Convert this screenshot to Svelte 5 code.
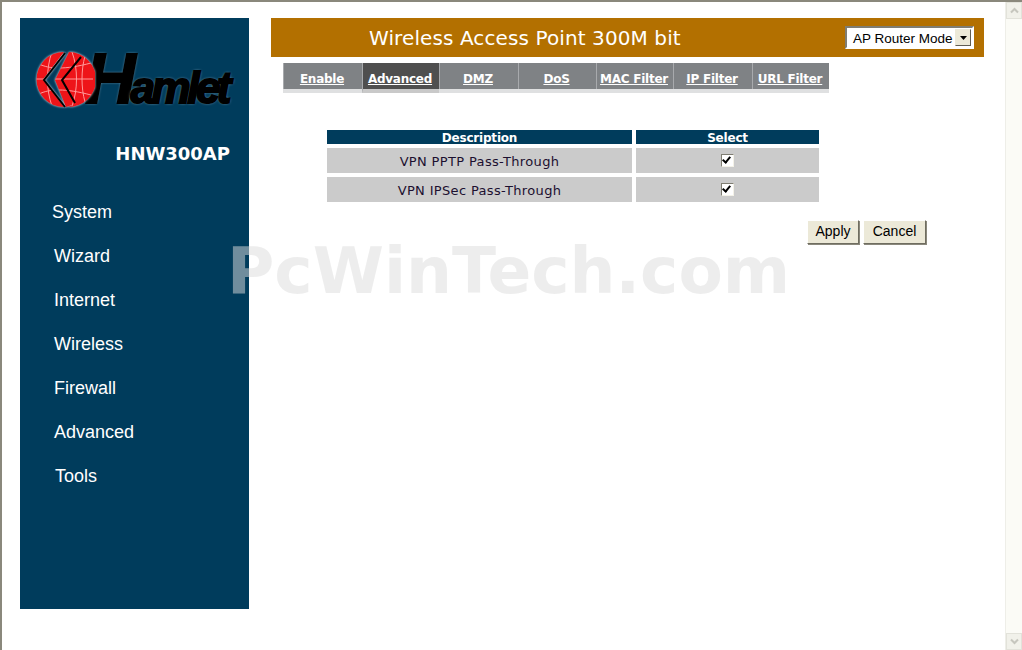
<script lang="ts">
	type NavItem = { label: string; nudge: number };

	const NAV: NavItem[] = [
		{ label: 'System', nudge: 0 },
		{ label: 'Wizard', nudge: 2 },
		{ label: 'Internet', nudge: 2 },
		{ label: 'Wireless', nudge: 2 },
		{ label: 'Firewall', nudge: 2 },
		{ label: 'Advanced', nudge: 2 },
		{ label: 'Tools', nudge: 3 }
	];

	const TABS = [
		{ label: 'Enable', width: 79 },
		{ label: 'Advanced', width: 77 },
		{ label: 'DMZ', width: 79 },
		{ label: 'DoS', width: 78 },
		{ label: 'MAC Filter', width: 77 },
		{ label: 'IP Filter', width: 79 },
		{ label: 'URL Filter', width: 77 }
	];

	const ROWS = ['VPN PPTP Pass-Through', 'VPN IPSec Pass-Through'];

	let active = $state('Advanced');
	let selected = $state(ROWS.map(() => true));

	// latitude and longitude lines of the logo globe
	const globeLines = [
		'M4 14 C14 19 30 20 56 13',
		'M1 29 H58',
		'M4 44 C14 39 30 38 56 45',
		'M17 2 C11 18 11 40 17 56',
		'M37 2 C43 18 43 40 37 56',
		'M50 6 C46 20 46 38 50 52'
	];
</script>

<div class="frame">
	<aside class="sidebar">
		<div class="logo">
			<svg class="globe" width="60" height="60" viewBox="0 0 60 60" aria-hidden="true">
				<defs>
					<clipPath id="globe-clip">
						<path d="M29 2 A27.5 27.5 0 0 0 29 57 L8 29.5 Z" />
						<path d="M34 2 A27.5 27.5 0 0 1 33 57 L40 54 L31 57 L20 30 Z" />
					</clipPath>
				</defs>
				<g clip-path="url(#globe-clip)">
					<rect width="60" height="60" fill="#ee1419" />
					{#each globeLines as d (d)}
						<path {d} fill="none" stroke="#ff9a9a" stroke-width="1" />
					{/each}
				</g>
				<path d="M30 3 L9 30 L30 57" fill="none" stroke="#000" stroke-width="2" />
				<path d="M46 7 L27 30 L40 53" fill="none" stroke="#000" stroke-width="2" />
			</svg>
			<span class="wordmark"><span class="cap">H</span>amlet</span>
		</div>
		<div class="model">HNW300AP</div>
		<nav class="nav">
			{#each NAV as item (item.label)}
				<a href="#top" style:margin-left="{item.nudge}px">{item.label}</a>
			{/each}
		</nav>
	</aside>

	<main class="main">
		<header class="banner">
			<h1>Wireless Access Point 300M bit</h1>
			<div class="mode">
				<span>AP Router Mode</span>
				<span class="mode-arrow">
					<svg width="7" height="4" viewBox="0 0 7 4" aria-hidden="true"><path d="M0 0H7L3.5 4Z" fill="#000" /></svg>
				</span>
			</div>
		</header>

		<div class="tabs">
			{#each TABS as tab (tab.label)}
				<button
					type="button"
					class="tab"
					class:tab--active={tab.label === active}
					style:width="{tab.width}px"
					onclick={() => (active = tab.label)}>{tab.label}</button
				>
			{/each}
		</div>

		<div class="table">
			<div class="th">Description</div>
			<div class="th">Select</div>
			{#each ROWS as row, i (row)}
				<div class="td td--label">{row}</div>
				<div class="td">
					<input class="check" type="checkbox" bind:checked={selected[i]} aria-label={row} />
				</div>
			{/each}
		</div>

		<div class="actions">
			<button type="button" class="btn btn--apply">Apply</button>
			<button type="button" class="btn btn--cancel">Cancel</button>
		</div>
	</main>

	<div class="scrollbar">
		<span class="scroll-btn">
			<svg width="9" height="7" viewBox="0 0 9 7" aria-hidden="true"><path d="M1 5.5L4.5 2L8 5.5" fill="none" stroke="#c6c6be" stroke-width="2" /></svg>
		</span>
		<span class="scroll-btn">
			<svg width="9" height="7" viewBox="0 0 9 7" aria-hidden="true"><path d="M1 1.5L4.5 5L8 1.5" fill="none" stroke="#c6c6be" stroke-width="2" /></svg>
		</span>
	</div>

	<div class="watermark">PcWinTech.com</div>
</div>

<style>
	:global(body) {
		margin: 0;
		background: #fff;
	}

	.frame {
		position: relative;
		display: flex;
		width: 1022px;
		height: 650px;
		box-sizing: border-box;
		overflow: hidden;
		border-top: 2px solid #8a887c;
		border-left: 2px solid #8a887c;
		background: #fff;
	}

	.sidebar {
		flex: none;
		width: 229px;
		height: 591px;
		margin: 16px 0 0 18px;
		background: #003c5c;
		color: #fff;
	}

	.logo {
		display: flex;
		align-items: flex-start;
		height: 60px;
		margin: 32px 0 0 15px;
	}

	.globe {
		flex: none;
		filter: drop-shadow(0 0 1px #dfe8ee);
	}

	.wordmark {
		margin: -11px 0 0 -10px;
		color: #000;
		font: italic 700 44px/80px 'Liberation Sans', sans-serif;
		letter-spacing: -3.5px;
		-webkit-text-stroke: 2px #000;
		text-shadow: 0 0 3px #c7d6df;
		white-space: nowrap;
	}

	.cap {
		font-size: 70px;
		letter-spacing: -5px;
	}

	.model {
		margin-top: 34px;
		padding-right: 19px;
		font: 700 18px/20px 'DejaVu Sans', sans-serif;
		text-align: right;
	}

	.nav {
		display: flex;
		flex-direction: column;
		gap: 23px;
		margin: 38px 0 0 32px;
	}

	.nav a {
		color: #fff;
		font: 18px/21px 'Liberation Sans', Arial, sans-serif;
		text-decoration: none;
	}

	.main {
		flex: none;
		width: 713px;
		margin: 16px 0 0 22px;
	}

	.banner {
		display: flex;
		align-items: center;
		justify-content: space-between;
		box-sizing: border-box;
		height: 39px;
		padding: 0 10px 0 98px;
		background: #b37000;
	}

	h1 {
		margin: 0;
		color: #fff;
		font: 400 20px/24px 'DejaVu Sans', sans-serif;
		letter-spacing: 0.1px;
	}

	.mode {
		display: flex;
		align-items: center;
		justify-content: space-between;
		box-sizing: border-box;
		width: 129px;
		height: 23px;
		padding: 1px 1px 0 6px;
		border: 2px solid;
		border-color: #7f7d72 #fff #fff #7f7d72;
		background: #fff;
		color: #000;
		font: 13.5px/17px 'Liberation Sans', Arial, sans-serif;
		white-space: nowrap;
	}

	.mode-arrow {
		flex: none;
		display: flex;
		align-items: center;
		justify-content: center;
		width: 16px;
		height: 17px;
		margin-top: -1px;
		box-sizing: border-box;
		border: 1px solid;
		border-color: #ece9d8 #5f5d54 #5f5d54 #ece9d8;
		background: #ece9d8;
	}

	.tabs {
		display: flex;
		width: 546px;
		height: 26px;
		margin: 6px 0 0 12px;
		background: #7f8285;
		box-shadow: 0 4px 0 #dfe0e1;
	}

	.tab {
		position: relative;
		box-sizing: border-box;
		padding: 5px 2px 0 0;
		border: 0;
		border-left: 1px solid #a8aaad;
		background: transparent;
		color: #fff;
		font: 700 12px/16px 'DejaVu Sans', sans-serif;
		letter-spacing: -0.25px;
		text-decoration: underline;
		white-space: nowrap;
	}

	.tab--active {
		height: 30px;
		border-bottom: 4px solid #c9c9c9;
		background: #4f4f4f;
	}

	.table {
		display: grid;
		grid-template-columns: 305px 183px;
		gap: 4px;
		margin: 41px 0 0 56px;
		font-family: 'DejaVu Sans', sans-serif;
		font-size: 13px;
		text-align: center;
	}

	.th {
		height: 14px;
		background: #003c5c;
		color: #fff;
		font-size: 12px;
		font-weight: 700;
		letter-spacing: -0.2px;
		line-height: 16px;
	}

	.td {
		display: flex;
		align-items: center;
		justify-content: center;
		box-sizing: border-box;
		height: 25px;
		background: #cbcbcb;
		color: #1c1030;
		letter-spacing: 0.35px;
	}

	.td--label {
		padding-top: 2px;
	}

	.check {
		appearance: none;
		position: relative;
		box-sizing: border-box;
		width: 13px;
		height: 13px;
		margin: 0;
		border: 1px solid;
		border-color: #7f7d72 #f4f2e8 #f4f2e8 #7f7d72;
		background: #fff;
	}

	.check:checked::before {
		content: '';
		position: absolute;
		left: 2px;
		top: 0;
		width: 3px;
		height: 6px;
		border: solid #000;
		border-width: 0 2px 2px 0;
		transform: rotate(40deg);
	}

	.actions {
		display: flex;
		gap: 4px;
		margin: 18px 0 0 536px;
	}

	.btn {
		box-sizing: border-box;
		height: 24px;
		padding: 0 0 2px;
		border: 1px solid;
		border-color: #fff #6f6d60 #6f6d60 #fff;
		box-shadow: 1px 1px 0 #8a887c;
		background: #ece9d8;
		color: #000;
		font: 14px/17px 'Liberation Sans', Arial, sans-serif;
	}

	.btn--apply {
		width: 52px;
	}

	.btn--cancel {
		width: 63px;
	}

	.scrollbar {
		position: absolute;
		top: 0;
		right: 0;
		display: flex;
		flex-direction: column;
		justify-content: space-between;
		box-sizing: border-box;
		width: 17px;
		height: 648px;
		border-left: 1px solid #eeeee8;
		background: #fbfbf6;
	}

	.scroll-btn {
		display: flex;
		align-items: center;
		justify-content: center;
		height: 17px;
		background: #f1f1ea;
		border: 1px solid #e2e2da;
		box-sizing: border-box;
	}

	.watermark {
		position: absolute;
		left: 225px;
		top: 230px;
		color: rgba(220, 220, 220, 0.51);
		font: 700 64.6px/78px 'DejaVu Sans', sans-serif;
		white-space: nowrap;
		pointer-events: none;
	}
</style>
